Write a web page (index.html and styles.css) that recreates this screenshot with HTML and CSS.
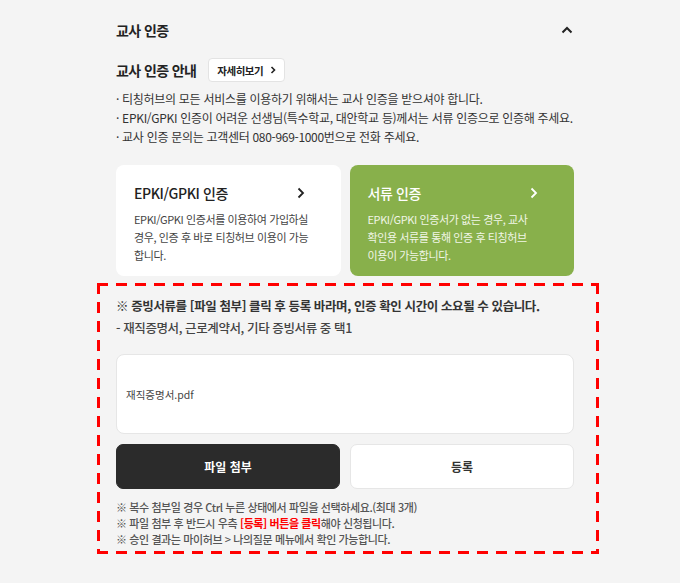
FILE: index.html
```html
<!DOCTYPE html>
<html lang="ko">
<head>
    <meta charset="UTF-8">
    <meta name="viewport" content="width=device-width, initial-scale=1.0">
    <title>교사 인증</title>
    <link rel="stylesheet" href="styles.css">
</head>
<body>
    <div class="container">
        <div class="section-head">
            <h2>교사 인증</h2>
            <svg class="fold-icon" width="12" height="8" viewBox="0 0 12 8">
                <path d="M1.5 6.5 L6 2 L10.5 6.5" fill="none" stroke="#222" stroke-width="2"/>
            </svg>
        </div>

        <div class="guide-head">
            <h3>교사 인증 안내</h3>
            <a href="#" class="more-btn">자세히보기
                <svg width="6" height="8" viewBox="0 0 6 8"><path d="M1.5 1 L4.5 4 L1.5 7" fill="none" stroke="#222" stroke-width="1.6"/></svg>
            </a>
        </div>

        <ul class="guide-list">
            <li>티칭허브의 모든 서비스를 이용하기 위해서는 교사 인증을 받으셔야 합니다.</li>
            <li>EPKI/GPKI 인증이 어려운 선생님(특수학교, 대안학교 등)께서는 서류 인증으로 인증해 주세요.</li>
            <li>교사 인증 문의는 고객센터 080-969-1000번으로 전화 주세요.</li>
        </ul>

        <div class="card-row">
            <a href="#" class="auth-card">
                <div class="card-title">
                    <span>EPKI/GPKI 인증</span>
                    <svg width="8" height="12" viewBox="0 0 8 12"><path d="M1.5 1.5 L6 6 L1.5 10.5" fill="none" stroke="#222" stroke-width="1.8"/></svg>
                </div>
                <p>EPKI/GPKI 인증서를 이용하여 가입하실 경우, 인증 후 바로 티칭허브 이용이 가능합니다.</p>
            </a>
            <a href="#" class="auth-card active">
                <div class="card-title">
                    <span>서류 인증</span>
                    <svg width="8" height="12" viewBox="0 0 8 12"><path d="M1.5 1.5 L6 6 L1.5 10.5" fill="none" stroke="#fff" stroke-width="1.8"/></svg>
                </div>
                <p>EPKI/GPKI 인증서가 없는 경우, 교사 확인용 서류를 통해 인증 후 티칭허브 이용이 가능합니다.</p>
            </a>
        </div>

        <div class="doc-box">
            <p class="doc-notice">※ 증빙서류를 [파일 첨부] 클릭 후 등록 바라며, 인증 확인 시간이 소요될 수 있습니다.</p>
            <p class="doc-sub">- 재직증명서, 근로계약서, 기타 증빙서류 중 택1</p>

            <div class="file-list">
                <span>재직증명서.pdf</span>
            </div>

            <div class="btn-row">
                <button type="button" class="btn btn-dark">파일 첨부</button>
                <button type="button" class="btn btn-light">등록</button>
            </div>

            <ul class="note-list">
                <li>※ 복수 첨부일 경우 Ctrl 누른 상태에서 파일을 선택하세요.(최대 3개)</li>
                <li>※ 파일 첨부 후 반드시 우측 <strong>[등록] 버튼을 클릭</strong>해야 신청됩니다.</li>
                <li>※ 승인 결과는 마이허브 &gt; 나의질문 메뉴에서 확인 가능합니다.</li>
            </ul>
        </div>
    </div>
</body>
</html>
```

FILE: styles.css
```css
* {
    margin: 0;
    padding: 0;
    box-sizing: border-box;
}

body {
    font-family: 'Noto Sans CJK KR', 'Noto Sans', sans-serif;
    background: #f4f4f4;
    color: #222;
}

.container {
    width: 458px;
    margin-left: 116px;
    padding-top: 18px;
}

.section-head {
    display: flex;
    align-items: center;
    justify-content: space-between;
    height: 24px;
    padding-right: 1px;
}

.section-head h2 {
    font-size: 14px;
    font-weight: 700;
    color: #222;
    letter-spacing: -0.6px;
}

.guide-head {
    display: flex;
    align-items: center;
    gap: 12px;
    margin-top: 16px;
    height: 24px;
}

.guide-head h3 {
    font-size: 14px;
    font-weight: 700;
    color: #222;
    letter-spacing: -0.6px;
}

.more-btn {
    display: flex;
    align-items: center;
    gap: 7px;
    height: 24px;
    padding: 0 8px 0 8px;
    background: #fff;
    border: 1px solid #e3e3e3;
    border-radius: 4px;
    font-size: 10.5px;
    font-weight: 700;
    color: #222;
    letter-spacing: -0.5px;
    text-decoration: none;
}

.guide-list {
    list-style: none;
    margin-top: 7px;
}

.guide-list li {
    font-size: 12px;
    line-height: 19px;
    color: #333;
    letter-spacing: -0.3px;
}

.guide-list li::before {
    content: '· ';
}

.card-row {
    display: grid;
    grid-template-columns: 1fr 1fr;
    gap: 9px;
    margin-top: 19px;
}

.auth-card {
    display: block;
    height: 111px;
    padding: 17px 28px 0 18px;
    background: #fff;
    border-radius: 8px;
    text-decoration: none;
    color: #222;
}

.auth-card .card-title {
    display: flex;
    align-items: center;
    justify-content: space-between;
    height: 22px;
    margin-right: 8px;
}

.card-title span {
    font-size: 14px;
    font-weight: 500;
    letter-spacing: -0.4px;
}

.auth-card p {
    margin-top: 6px;
    font-size: 11px;
    line-height: 18px;
    color: #444;
    letter-spacing: -0.4px;
}

.auth-card.active {
    background: #88b04b;
    color: #fff;
}

.auth-card.active p {
    color: #f1f6e7;
    word-break: keep-all;
}

/* red dashed frame, drawn with gradients for longer dashes */
.doc-box {
    margin: 7px -25px 0 -19px;
    padding: 12px 25px 7px 19px;
    background:
        repeating-linear-gradient(90deg, #f00 0 11px, transparent 11px 19px) top left / 100% 3px no-repeat,
        repeating-linear-gradient(90deg, #f00 0 11px, transparent 11px 19px) bottom left / 100% 3px no-repeat,
        repeating-linear-gradient(180deg, #f00 0 11px, transparent 11px 19px) top left / 3px 100% no-repeat,
        repeating-linear-gradient(180deg, #f00 0 11px, transparent 11px 19px) top right / 3px 100% no-repeat;
}

.doc-notice {
    font-size: 12.5px;
    font-weight: 700;
    line-height: 22px;
    color: #333;
    letter-spacing: -0.4px;
}

.doc-sub {
    font-size: 12.5px;
    font-weight: 500;
    line-height: 22px;
    color: #444;
    letter-spacing: -0.4px;
}

.file-list {
    display: flex;
    align-items: center;
    height: 80px;
    margin-top: 15px;
    padding-left: 9px;
    background: #fff;
    border: 1px solid #e6e6e6;
    border-radius: 8px;
}

.file-list span {
    font-size: 10.5px;
    color: #444;
}

.btn-row {
    display: grid;
    grid-template-columns: 1fr 1fr;
    gap: 10px;
    margin-top: 10px;
}

.btn {
    height: 45px;
    border-radius: 7px;
    font-family: inherit;
    font-size: 12px;
    font-weight: 700;
    cursor: pointer;
}

.btn-dark {
    background: #2b2b2b;
    border: 1px solid #2b2b2b;
    color: #fff;
}

.btn-light {
    background: #fff;
    border: 1px solid #e6e6e6;
    color: #333;
}

.note-list {
    list-style: none;
    margin-top: 10px;
}

.note-list li {
    font-size: 11px;
    font-weight: 500;
    line-height: 16px;
    color: #555;
    letter-spacing: -0.4px;
}

.note-list strong {
    color: #f00;
    font-weight: 700;
}
```
